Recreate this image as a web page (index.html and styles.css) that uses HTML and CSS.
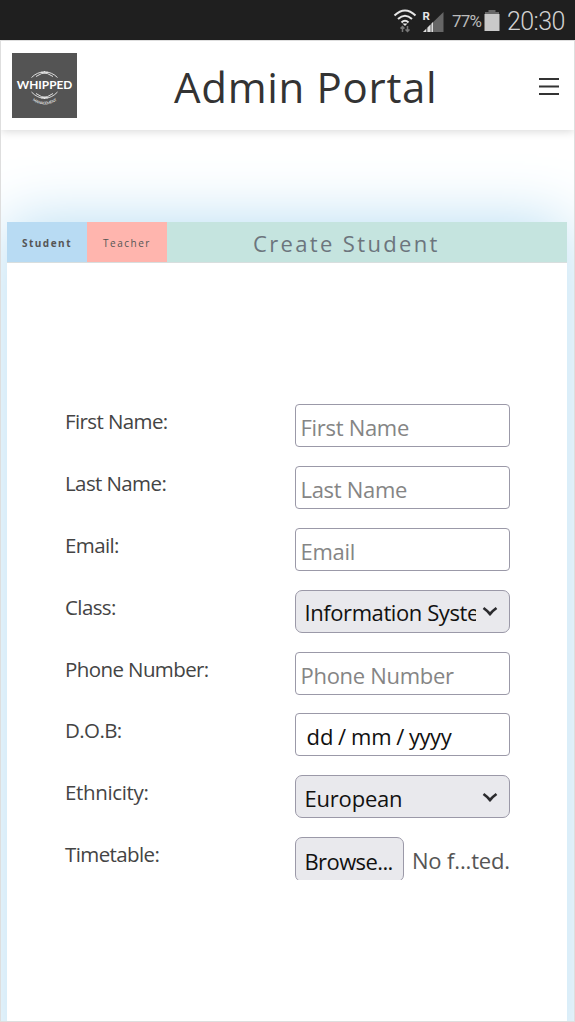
FILE: index.html
```html
<!DOCTYPE html>
<html lang="en">
<head>
<meta charset="utf-8">
<title>Admin Portal</title>
<link rel="stylesheet" href="styles.css">
</head>
<body>
<div class="status">
  <svg class="signals" width="52" height="26" viewBox="0 0 52 26">
    <g fill="none" stroke="#e6e6e6" stroke-width="2">
      <path d="M1.500 7.500Q12 -2.500 22.500 7.500M5 11Q12 4.500 19 11M8.500 14.500Q12 11 15.500 14.500"/>
    </g>
    <path d="M9.500 15.500h5l-2.500 2.500z" fill="#e6e6e6"/>
    <path d="M9.500 24v-5M7.500 20.500l2-2 2 2M14.500 18v5M12.500 21.500l2 2 2-2" fill="none" stroke="#777" stroke-width="1.500"/>
    <path d="M30 24L50.500 4v20z" fill="#666"/>
    <path d="M30 24l3-3v3zM34.500 24v-4.500l3-3v7.500zM38.500 24v-8.500l1.500-1.500v10z" fill="#ddd"/>
    <text x="29.500" y="12" class="roam">R</text>
  </svg>
  <span class="percent">77%</span>
  <svg class="battery" width="16" height="22" viewBox="0 0 16 22"><path d="M4.500 0h7v2H15v3H1V2h3.500z" fill="#686868"/><path d="M.5 4h15v17H.5z" fill="#c9c9c9"/></svg>
  <span class="clock">20:30</span>
</div>
<div class="page">
  <header class="header">
    <svg class="logo" width="65" height="65" viewBox="0 0 65 65">
      <rect width="65" height="65" fill="#545454"/>
      <g fill="none" stroke="#eee" stroke-width=".9">
        <path d="M19.500 24.500Q25 19 33 18.700M45.500 24.500Q40 19 32 18.700M24 23.500Q29 19.800 36 19.300M29 19.300Q36 19.800 41 23.500"/>
        <path d="M19.500 39Q25 45 33 45.500M45.500 39Q40 45 32 45.500M24 40.500Q29 44.500 36 44.900M29 44.900Q36 44.500 41 40.500"/>
      </g>
      <text x="4.800" y="35.800" textLength="55.500" lengthAdjust="spacingAndGlyphs" class="brand">WHIPPED</text>
      <path id="arc" d="M20.500 47.500Q32.500 55.500 45 47.500" fill="none"/>
      <text class="sub"><textPath href="#arc" textLength="26">MANAGEMENT</textPath></text>
    </svg>
    <h1 class="title">Admin Portal</h1>
    <svg class="menu" width="20" height="17" viewBox="0 0 20 17"><path d="M0 1h20M0 8.500h20M0 16h20" stroke="#333" stroke-width="1.800"/></svg>
  </header>
  <main class="card">
    <div class="tabs">
      <div class="tab student">Student</div>
      <div class="tab teacher">Teacher</div>
      <h2 class="heading">Create Student</h2>
    </div>
    <form class="form">
      <div class="row"><label class="label">First Name:</label><div class="field hint">First Name</div></div>
      <div class="row"><label class="label">Last Name:</label><div class="field hint">Last Name</div></div>
      <div class="row"><label class="label">Email:</label><div class="field hint">Email</div></div>
      <div class="row"><label class="label">Class:</label><div class="field select"><span class="value">Information Systems</span><svg class="chevron" width="16" height="11" viewBox="0 0 16 11"><path d="M1.500 2Q5 4.500 8 8Q11 4.500 14.500 2" /></svg></div></div>
      <div class="row"><label class="label">Phone Number:</label><div class="field hint">Phone Number</div></div>
      <div class="row"><label class="label">D.O.B:</label><div class="field date"><span>dd</span><span>/</span><span>mm</span><span>/</span><span class="year">yyyy</span></div></div>
      <div class="row"><label class="label ethnicity">Ethnicity:</label><div class="field select"><span class="value euro">European</span><svg class="chevron" width="16" height="11" viewBox="0 0 16 11"><path d="M1.500 2Q5 4.500 8 8Q11 4.500 14.500 2" /></svg></div></div>
      <div class="row"><label class="label">Timetable:</label><div class="file"><div class="browse">Browse...</div><span class="none">No f...ted.</span></div></div>
    </form>
  </main>
</div>
</body>
</html>
```
FILE: styles.css
```css
* { box-sizing: border-box; }
body { margin: 0; height: 1022px; overflow: hidden; background: #fff; font-family: "Open Sans", "Noto Sans", sans-serif; }
.status { height: 40px; background: #1f1f1f; display: flex; align-items: center; justify-content: flex-end; padding-right: 10px; padding-top: 2px; font-family: Roboto, sans-serif; color: #d2d2d2; }
.signals { margin-right: 7px; }
.roam { font: bold 11.5px Roboto, sans-serif; fill: #e6e6e6; }
.percent { font-size: 17px; width: 30px; letter-spacing: -.8px; color: #bbb; white-space: nowrap; }
.battery { margin: 0 7px 0 2px; }
.clock { font-size: 25px; font-weight: 300; width: 58px; letter-spacing: -.6px; white-space: nowrap; }
.page { height: 982px; border: 1px solid #dedede; overflow: hidden; }
.header { position: relative; z-index: 1; height: 89px; display: flex; align-items: center; padding: 0 15px 0 11px; background: #fff; box-shadow: 0 1px 9px rgba(0,0,0,.17); }
.logo { flex: none; }
.brand { font: bold 12px Lato, sans-serif; fill: #fff; }
.sub { font: bold 3.8px Lato, sans-serif; fill: #ddd; }
.title { margin: 0; flex: 1; padding: 3px 0 0 97px; font-size: 42px; font-weight: 400; line-height: 60px; letter-spacing: .7px; color: #333; white-space: nowrap; }
.menu { flex: none; margin-top: 2px; }
.card { margin: 92px 7px 0 6px; height: 850px; background: #fff; box-shadow: 0 0 60px #b5dcf2; }
.tabs { display: flex; height: 41px; border-bottom: 1px solid #d8dede; }
.tab { width: 80px; font-size: 10px; letter-spacing: 1.5px; line-height: 43px; text-align: center; color: #555; }
.student { background: #b8dbf3; font-weight: 700; }
.teacher { background: #ffb5ae; }
.heading { margin: 0; flex: 1; background: #c5e4df; color: #6c757d; font-size: 22px; font-weight: 400; letter-spacing: 2.35px; line-height: 43px; padding-left: 86px; white-space: nowrap; }
.form { padding: 141px 57px 0 58px; }
.row { display: flex; justify-content: space-between; height: 61.9px; }
.label { font-size: 20.5px; line-height: 34.5px; color: #444; white-space: nowrap; letter-spacing: -.6px; }
.ethnicity { letter-spacing: -.35px; }
.field { width: 215.5px; height: 43px; border: 1.5px solid #9b99a8; border-radius: 4px; padding: 2px 5px 0; font-size: 22px; line-height: 40px; white-space: nowrap; color: #111; }
.hint { color: #858585; letter-spacing: -.3px; }
.select { display: flex; align-items: center; background: #e9e9ed; border-radius: 7px; padding: 2px 11px 0 9px; justify-content: space-between; }
.value { width: 171px; overflow: hidden; letter-spacing: -.42px; }
.euro { letter-spacing: -.2px; }
.chevron { flex: none; margin-top: -1px; }
.chevron path { fill: none; stroke: #2b2b2e; stroke-width: 2.7; }
.date { display: flex; gap: 4.7px; padding-left: 11px; }
.year { letter-spacing: -.5px; }
.file { width: 215.5px; height: 43px; display: flex; justify-content: space-between; overflow: hidden; font-size: 22px; white-space: nowrap; }
.browse { width: 109px; height: 45px; border: 1.5px solid #9b99a8; border-radius: 7px; background: #e9e9ed; padding: 2px 0 0 9px; line-height: 42px; color: #111; letter-spacing: -.6px; }
.none { line-height: 47px; color: #555; letter-spacing: -.15px; }
```
